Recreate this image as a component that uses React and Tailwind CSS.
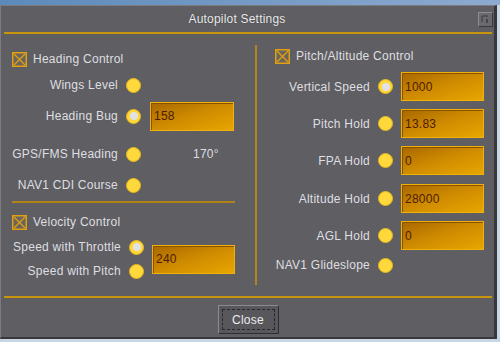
import React from "react";

// small yellow radio knob, filled dot when selected
const Radio = ({ on }) => (
  <span className="flex h-[15px] w-[15px] shrink-0 items-center justify-center rounded-full border border-[#e6b61c] bg-[#ffd83c]">
    {on && <span className="h-[8px] w-[8px] rounded-full bg-[#e2e2e6]" />}
  </span>
);

const Check = () => (
  <svg width="15" height="15" viewBox="0 0 15 15" className="shrink-0">
    <rect x="0.75" y="0.75" width="13.5" height="13.5" fill="#6b655e" stroke="#e0a010" strokeWidth="1.5" />
    <path d="M2 2 L13 13 M13 2 L2 13" stroke="#e0a010" strokeWidth="1.3" />
  </svg>
);

const Field = ({ value, w = "w-[84px]" }) => (
  <div className={`flex h-[29px] ${w} shrink-0 items-center border border-[#f0b208] bg-linear-to-br from-[#a86800] via-[#d08c00] to-[#e8a600] pl-[3px] text-[12px] text-[#4e1c00] shadow-[inset_1px_1px_0_#8a5200]`}>
    {value}
  </div>
);

const Label = ({ children, w }) => (
  <span className={`${w} shrink-0 whitespace-nowrap text-right`}>{children}</span>
);

export default function App() {
  return (
    <div className="flex h-[342px] w-[500px] flex-col bg-[#c6d6e2] font-['Liberation_Sans',Arial,sans-serif] text-[12px] tracking-[0.25px] text-[#dedee0]">
      <div className="h-[5px] bg-linear-to-r from-[#5b8aba] to-[#8eaad0]" />
      <div className="flex h-[334px] w-[497px] flex-col border-t border-l border-[#7c7b80] border-r-[3px] border-b-[2px] border-r-[#38373b] border-b-[#38373b] bg-[#5f5e63] pl-[1px]">
        {/* title bar */}
        <div className="flex h-[26px] items-center">
          <div className="flex-1 pr-[6px] text-center text-[12px] tracking-[0.2px] text-[#ececee] [text-shadow:0_0_1px_#333]">
            Autopilot Settings
          </div>
          <div className="mr-[1px] flex h-[15px] w-[15px] items-center justify-center border border-t-[#8e8d92] border-l-[#8e8d92] border-r-[#3a393d] border-b-[#3a393d] bg-[#6a696e]">
            <svg width="9" height="9" viewBox="0 0 9 9">
              <path d="M1 1 H7 M1 1 V7" stroke="#3c3b40" strokeWidth="1" />
              <path d="M6 4 V8" stroke="#3c3b40" strokeWidth="1.5" />
            </svg>
          </div>
        </div>
        <div className="mx-[2px] h-[2px] bg-[#c8960e]" />

        {/* body */}
        <div className="flex h-[262px]">
          {/* left column */}
          <div className="flex w-[253px] flex-col pl-[10px]">
            <div className="mt-[15px] flex h-[20px] items-center gap-[6px]">
              <Check />
              <span>Heading Control</span>
            </div>
            <div className="mt-[6px] flex h-[20px] items-center gap-[8px]">
              <Label w="w-[106px]">Wings Level</Label>
              <Radio />
            </div>
            <div className="mt-[6px] flex h-[30px] items-center">
              <Label w="w-[106px]">Heading Bug</Label>
              <span className="ml-[8px]"><Radio on /></span>
              <span className="ml-[9px]"><Field value="158" /></span>
            </div>
            <div className="mt-[13px] flex h-[20px] items-center">
              <Label w="w-[106px]">GPS/FMS Heading</Label>
              <span className="ml-[8px]"><Radio /></span>
              <span className="ml-[52px]">170°</span>
            </div>
            <div className="mt-[11px] flex h-[20px] items-center">
              <Label w="w-[106px]">NAV1 CDI Course</Label>
              <span className="ml-[8px]"><Radio /></span>
            </div>
            <div className="mt-[6px] h-[2px] w-[223px] bg-[#b08418]" />
            <div className="mt-[9px] flex h-[20px] items-center gap-[6px]">
              <Check />
              <span>Velocity Control</span>
            </div>
            <div className="mt-[3px] flex items-center">
              <div className="flex flex-col">
                <div className="flex h-[24px] items-center">
                  <Label w="w-[109px]">Speed with Throttle</Label>
                  <span className="ml-[8px]"><Radio on /></span>
                </div>
                <div className="flex h-[24px] items-center">
                  <Label w="w-[109px]">Speed with Pitch</Label>
                  <span className="ml-[8px]"><Radio /></span>
                </div>
              </div>
              <span className="ml-[8px]"><Field value="240" w="w-[83px]" /></span>
            </div>
          </div>

          {/* divider */}
          <div className="mt-[11px] h-[240px] w-[2px] bg-[#b08418]" />

          {/* right column */}
          <div className="flex flex-1 flex-col pl-[18px]">
            <div className="mt-[12px] flex h-[20px] items-center gap-[6px]">
              <Check />
              <span>Pitch/Altitude Control</span>
            </div>
            <div className="mt-[6px] flex h-[29px] items-center">
              <Label w="w-[95px]">Vertical Speed</Label>
              <span className="ml-[8px]"><Radio on /></span>
              <span className="ml-[8px]"><Field value="1000" w="w-[83px]" /></span>
            </div>
            <div className="mt-[8px] flex h-[29px] items-center">
              <Label w="w-[95px]">Pitch Hold</Label>
              <span className="ml-[8px]"><Radio /></span>
              <span className="ml-[8px]"><Field value="13.83" w="w-[83px]" /></span>
            </div>
            <div className="mt-[8px] flex h-[29px] items-center">
              <Label w="w-[95px]">FPA Hold</Label>
              <span className="ml-[8px]"><Radio /></span>
              <span className="ml-[8px]"><Field value="0" w="w-[83px]" /></span>
            </div>
            <div className="mt-[9px] flex h-[29px] items-center">
              <Label w="w-[95px]">Altitude Hold</Label>
              <span className="ml-[8px]"><Radio /></span>
              <span className="ml-[8px]"><Field value="28000" w="w-[83px]" /></span>
            </div>
            <div className="mt-[8px] flex h-[29px] items-center">
              <Label w="w-[95px]">AGL Hold</Label>
              <span className="ml-[8px]"><Radio /></span>
              <span className="ml-[8px]"><Field value="0" w="w-[83px]" /></span>
            </div>
            <div className="mt-[5px] flex h-[20px] items-center">
              <Label w="w-[95px]">NAV1 Glideslope</Label>
              <span className="ml-[8px]"><Radio /></span>
            </div>
          </div>
        </div>

        <div className="mx-[2px] h-[2px] bg-[#c8960e]" />

        {/* footer */}
        <div className="flex flex-1 justify-center pt-[7px]">
          <button className="flex h-[29px] w-[61px] items-center justify-center border border-t-[#8c8b90] border-l-[#8c8b90] border-r-[#2e2d31] border-b-[#2e2d31] bg-[#58575c] p-[3px] text-[12px] text-[#ececee]">
            <span className="flex h-full w-full items-center justify-center border border-dashed border-[#2a292d]">
              Close
            </span>
          </button>
        </div>
      </div>
    </div>
  );
}
